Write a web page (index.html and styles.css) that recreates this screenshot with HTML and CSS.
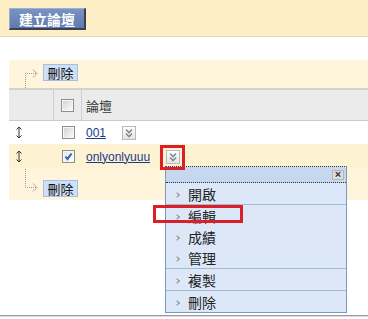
FILE: index.html
```html
<!DOCTYPE html>
<html lang="zh-Hant">
<head>
  <meta charset="utf-8">
  <title>論壇</title>
  <meta name="viewport" content="width=device-width, initial-scale=1">
  <link rel="stylesheet" href="styles.css">
</head>
<body>
  <div class="toolbar">
    <button class="create-button">建立論壇</button>
  </div>

  <div class="forum-list">
    <!-- actions for the selected rows, above the table -->
    <div class="bulk-actions bulk-top">
      <svg class="connector" width="18" height="28" viewBox="0 0 18 28">
        <path d="M0.5 28 V13.5 H11" />
        <path class="tip" d="M8 9.5 L12 13.5 L8 17.5" />
      </svg>
      <button class="bulk-button">刪除</button>
    </div>

    <div class="list-row list-head">
      <div class="cell handle-cell"></div>
      <div class="cell check-cell"><span class="checkbox"></span></div>
      <div class="cell name-cell head-label">論壇</div>
    </div>

    <div class="list-row">
      <div class="cell handle-cell">
        <svg class="handle" width="6" height="13" viewBox="0 0 6 13">
          <path d="M3 1 V12 M0.5 3.5 L3 1 L5.5 3.5 M0.5 9.5 L3 12 L5.5 9.5" />
        </svg>
      </div>
      <div class="cell check-cell"><span class="checkbox"></span></div>
      <div class="cell name-cell">
        <a href="#">001</a>
        <span class="menu-toggle">
          <svg width="12" height="12" viewBox="0 0 12 12"><path d="M3 2.5 L6 5.5 L9 2.5 M3 6.5 L6 9.5 L9 6.5" /></svg>
        </span>
      </div>
    </div>

    <div class="list-row is-selected">
      <div class="cell handle-cell">
        <svg class="handle" width="6" height="13" viewBox="0 0 6 13">
          <path d="M3 1 V12 M0.5 3.5 L3 1 L5.5 3.5 M0.5 9.5 L3 12 L5.5 9.5" />
        </svg>
      </div>
      <div class="cell check-cell">
        <span class="checkbox is-checked">
          <svg width="11" height="11" viewBox="0 0 11 11"><path d="M2.5 5.5 L4.5 8 L8.5 2.5" /></svg>
        </span>
      </div>
      <div class="cell name-cell">
        <a href="#">onlyonlyuuu</a>
        <span class="menu-toggle">
          <svg width="12" height="12" viewBox="0 0 12 12"><path d="M3 2.5 L6 5.5 L9 2.5 M3 6.5 L6 9.5 L9 6.5" /></svg>
        </span>
      </div>
    </div>

    <!-- same actions, below the table -->
    <div class="bulk-actions bulk-bottom">
      <svg class="connector" width="18" height="31" viewBox="0 0 18 31">
        <path d="M0.5 0 V18.5 H11" />
        <path class="tip" d="M8 14.5 L12 18.5 L8 22.5" />
      </svg>
      <button class="bulk-button">刪除</button>
    </div>
  </div>

  <div class="footer-rule"></div>

  <!-- row menu, opened from the second row -->
  <div class="context-menu">
    <div class="menu-head"><span class="menu-close">×</span></div>
    <div class="menu-group">
      <div class="menu-item"><span class="chev"></span>開啟</div>
    </div>
    <div class="menu-group">
      <div class="menu-item"><span class="chev"></span>編輯</div>
      <div class="menu-item"><span class="chev"></span>成績</div>
      <div class="menu-item"><span class="chev"></span>管理</div>
    </div>
    <div class="menu-group">
      <div class="menu-item"><span class="chev"></span>複製</div>
    </div>
    <div class="menu-group last">
      <div class="menu-item"><span class="chev"></span>刪除</div>
    </div>
  </div>

  <div class="callout callout-toggle"></div>
  <div class="callout callout-edit"></div>
</body>
</html>
```

FILE: styles.css
```css
body {
  margin: 0;
  background-color: #fff;
  font-family: "Liberation Sans", "Noto Sans CJK TC", sans-serif;
  font-size: 12px;
  color: #000;
}

.toolbar {
  box-sizing: border-box;
  height: 37px;
  padding: 8px 0 0 9px;
  background-color: #fdeec5;
  border-bottom: 1px solid #e1d9c4;
}

.create-button {
  box-sizing: border-box;
  width: 77px;
  height: 22px;
  padding: 0;
  border: 1px solid;
  border-width: 1px 2px 2px 1px;
  border-color: #9cb0d4 #3a3f52 #3a3f52 #9cb0d4;
  background: linear-gradient(#7993c2, #5f7aac);
  color: #fff;
  font-family: "Noto Sans CJK TC", sans-serif;
  font-size: 14px;
  font-weight: bold;
  line-height: 18px;
  letter-spacing: 0;
}

.forum-list {
  margin: 23px 0 0 9px;
}

.bulk-actions {
  display: flex;
  padding-left: 16px;
  background-color: #fef5dc;
}

.bulk-top {
  height: 28px;
  align-items: flex-start;
}

.bulk-top .bulk-button {
  margin-top: 4px;
}

.bulk-bottom {
  height: 31px;
}

.bulk-bottom .bulk-button {
  margin-top: 11px;
}

.connector {
  flex: none;
}

.connector path {
  fill: none;
  stroke: #9a9a9a;
  stroke-width: 1;
  stroke-dasharray: 1 1;
}

.connector .tip {
  stroke-dasharray: none;
  stroke: #a8a8a8;
}

.bulk-button {
  box-sizing: border-box;
  width: 35px;
  height: 17px;
  padding: 0;
  border: 1px solid #a6bedf;
  background-color: #cfe0f6;
  font-family: "Noto Sans CJK TC", sans-serif;
  font-size: 13px;
  line-height: 14px;
  color: #111;
}

.list-row {
  display: flex;
  align-items: center;
  height: 23px;
}

.list-head {
  height: 30px;
  align-items: stretch;
  background-color: #ebebeb;
  border-top: 2px solid #d5d1c9;
  border-bottom: 1px solid #cbcbcb;
}

.list-head .handle-cell,
.list-head .check-cell {
  border-right: 1px solid #cfcfcf;
}

.is-selected {
  height: 25px;
  background-color: #fdf2d2;
}

.cell {
  box-sizing: border-box;
  display: flex;
  align-items: center;
}

.handle-cell {
  width: 45px;
  padding-left: 7px;
}

.check-cell {
  width: 28px;
  justify-content: center;
}

.name-cell {
  flex: 1;
  padding-left: 4px;
}

.head-label {
  font-family: "Noto Sans CJK TC", sans-serif;
  font-size: 13px;
  color: #333;
}

.handle path {
  fill: none;
  stroke: #333;
  stroke-width: 1;
}

.checkbox {
  box-sizing: border-box;
  display: flex;
  align-items: center;
  justify-content: center;
  width: 13px;
  height: 13px;
  border: 1px solid #8e8f8f;
  background: linear-gradient(135deg, #d2d2d2, #f4f4f4 80%);
  box-shadow: inset 0 0 0 1px #f6f6f6;
}

.checkbox.is-checked {
  background: linear-gradient(135deg, #e6e6e6, #fbfbfb 80%);
}

.checkbox svg path {
  fill: none;
  stroke: #2f5fb4;
  stroke-width: 2;
}

.name-cell a {
  color: #1b3a8c;
  text-decoration: underline;
}

.menu-toggle {
  box-sizing: border-box;
  display: flex;
  align-items: center;
  justify-content: center;
  width: 14px;
  height: 14px;
  margin-left: 16px;
  border: 1px solid #b9b9b9;
  background: linear-gradient(#ffffff, #e4e4e4);
}

.menu-toggle path {
  fill: none;
  stroke: #7f8a99;
  stroke-width: 1.6;
}

.footer-rule {
  margin-top: 115px;
  border-top: 1px solid #9a9a9a;
  border-bottom: 1px solid #dcdcdc;
}

.context-menu {
  position: absolute;
  left: 165px;
  top: 166px;
  width: 182px;
  box-sizing: border-box;
  border: 1px solid #7d98bd;
  border-top: 1px dotted #333;
  background-color: #dce8f7;
  font-family: "Noto Sans CJK TC", sans-serif;
  font-size: 14px;
  color: #222;
}

.menu-head {
  display: flex;
  justify-content: flex-end;
  align-items: center;
  height: 15px;
  padding-right: 2px;
  background-color: #c6d8f0;
  border-bottom: 1px dotted #333;
}

.menu-close {
  box-sizing: border-box;
  width: 12px;
  height: 10px;
  border: 1px solid #b5b5b5;
  background-color: #dedede;
  font-family: "Liberation Sans", sans-serif;
  font-size: 11px;
  font-weight: bold;
  line-height: 7px;
  text-align: center;
  color: #333;
}

.menu-group {
  border-bottom: 1px solid #a3b8d4;
}

.menu-group.last {
  border-bottom: none;
}

.menu-item {
  display: flex;
  align-items: center;
  height: 21px;
  padding-left: 9px;
}

.menu-group:first-of-type .menu-item {
  height: 20px;
}

.chev {
  width: 3px;
  height: 3px;
  margin: 3px 9px 0 0;
  border-top: 1px solid #8c8c8c;
  border-right: 1px solid #8c8c8c;
  transform: rotate(45deg);
}

.callout {
  position: absolute;
  box-sizing: border-box;
  border: 3px solid #dc1f26;
}

.callout-toggle {
  left: 160px;
  top: 145px;
  width: 25px;
  height: 25px;
}

.callout-edit {
  left: 153px;
  top: 205px;
  width: 90px;
  height: 18px;
}
```
